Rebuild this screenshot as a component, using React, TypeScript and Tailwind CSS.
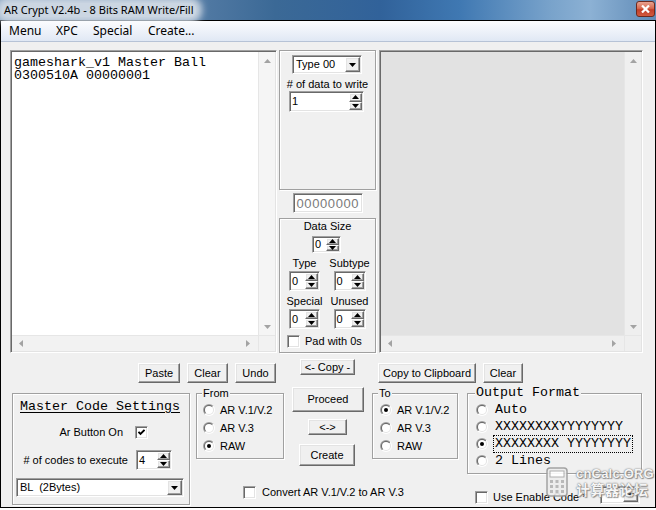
import React from "react";

const SUNKEN =
  "border border-t-[#a0a0a0] border-l-[#a0a0a0] border-b-white border-r-white shadow-[inset_1px_1px_0_#696969,inset_-1px_-1px_0_#e3e3e3]";
const RAISED =
  "bg-[#f0f0f0] border border-t-white border-l-white border-b-[#696969] border-r-[#696969] shadow-[inset_-1px_-1px_0_#a0a0a0,inset_1px_1px_0_#e3e3e3]";
const GROUP = "border border-[#a0a0a0] shadow-[inset_1px_1px_0_#ffffff,1px_1px_0_#ffffff]";
const MONO = "font-['Liberation_Mono','Courier_New',monospace] text-[13.33px]";

function Tri({ dir, color = "#000" }: { dir: "up" | "down" | "left" | "right"; color?: string }) {
  const vert = dir === "up" || dir === "down";
  const w = vert ? 7 : 4;
  const h = vert ? 4 : 7;
  const d =
    dir === "up" ? "M0 4h7L3.5 0z" : dir === "down" ? "M0 0h7L3.5 4z" : dir === "left" ? "M4 0v7L0 3.5z" : "M0 0v7L4 3.5z";
  return (
    <svg width={w} height={h} viewBox={`0 0 ${w} ${h}`} className="block">
      <path d={d} fill={color} />
    </svg>
  );
}

function Btn({ cls, children }: { cls: string; children: React.ReactNode }) {
  return (
    <div className={`${RAISED} ${cls} shrink-0 flex items-center justify-center text-[11px] leading-none text-black`}>
      {children}
    </div>
  );
}

function Spin({ cls, value }: { cls: string; value: string }) {
  return (
    <div className={`${SUNKEN} ${cls} shrink-0 bg-white flex p-[1px]`}>
      <div className="flex-1 flex items-center pl-[1px] text-[11px] leading-none">{value}</div>
      <div className="flex flex-col w-[13px]">
        <div className={`${RAISED} flex-1 flex items-center justify-center`}>
          <Tri dir="up" />
        </div>
        <div className={`${RAISED} flex-1 flex items-center justify-center`}>
          <Tri dir="down" />
        </div>
      </div>
    </div>
  );
}

function Combo({ cls, value }: { cls: string; value: string }) {
  return (
    <div className={`${SUNKEN} ${cls} shrink-0 bg-white flex p-[1px]`}>
      <div className="flex-1 flex items-center pl-[2px] text-[11px] leading-none whitespace-pre">{value}</div>
      <div className={`${RAISED} w-[15px] flex items-center justify-center`}>
        <Tri dir="down" />
      </div>
    </div>
  );
}

function RadioIcon({ checked }: { checked?: boolean }) {
  return (
    <svg width="12" height="12" viewBox="0 0 12 12" className="block shrink-0">
      <defs>
        <linearGradient id="ro" x1="0" y1="0" x2="1" y2="1">
          <stop offset="0.5" stopColor="#a0a0a0" />
          <stop offset="0.5" stopColor="#ffffff" />
        </linearGradient>
        <linearGradient id="ri" x1="0" y1="0" x2="1" y2="1">
          <stop offset="0.5" stopColor="#696969" />
          <stop offset="0.5" stopColor="#e3e3e3" />
        </linearGradient>
      </defs>
      <circle cx="6" cy="6" r="6" fill="url(#ro)" />
      <circle cx="6" cy="6" r="5" fill="url(#ri)" />
      <circle cx="6" cy="6" r="4" fill="#ffffff" />
      {checked && <circle cx="6" cy="6" r="2" fill="#000" />}
    </svg>
  );
}

function Check({ checked }: { checked?: boolean }) {
  return (
    <div className={`${SUNKEN} w-[13px] h-[13px] shrink-0 bg-white flex items-center justify-center`}>
      {checked && (
        <svg width="7" height="7" viewBox="0 0 7 7" className="block">
          <path d="M0.5 2.8 L2.5 4.8 L6.5 0.8" stroke="#000" strokeWidth="1.9" fill="none" />
        </svg>
      )}
    </div>
  );
}

function RadioRow({
  label,
  checked,
  gap,
  mono,
  focus,
  h,
}: {
  label: string;
  checked?: boolean;
  gap: string;
  mono?: boolean;
  focus?: boolean;
  h: string;
}) {
  return (
    <div className={`flex items-center ${h}`}>
      <RadioIcon checked={checked} />
      <span
        className={`${gap} whitespace-pre ${mono ? `${MONO} leading-[14px]` : "text-[11px] leading-none"} ${
          focus ? "outline outline-1 outline-dotted outline-black outline-offset-[1px]" : ""
        }`}
      >
        {label}
      </span>
    </div>
  );
}

function VScroll({ bg }: { bg: string }) {
  return (
    <div className={`w-[17px] ${bg} border-l border-[#e6e6e6] flex flex-col items-center justify-between pt-[7px] pb-[6px]`}>
      <Tri dir="up" color="#a3a3a3" />
      <Tri dir="down" color="#a3a3a3" />
    </div>
  );
}

function HScroll({ bg }: { bg: string }) {
  return (
    <div className={`h-[16px] flex-1 ${bg} border-t border-[#e6e6e6] flex items-center justify-between pl-[7px] pr-[8px]`}>
      <Tri dir="left" color="#a3a3a3" />
      <Tri dir="right" color="#a3a3a3" />
    </div>
  );
}

export default function App() {
  return (
    <div className="w-[656px] h-[510px] bg-white relative overflow-hidden font-['Liberation_Sans',Arial,sans-serif] text-black">
      {/* Title bar */}
      <div className="h-[20px] flex items-center bg-[linear-gradient(90deg,#7d9bbb_0%,#5d82aa_25%,#3b6996_42%,#31629a_58%,#3f78b2_70%,#79a3cb_84%,#8cb1d4_90%,#5f8ab6_100%)]">
        <div className="ml-[2px] px-[2px] rounded-[6px] bg-[#cbd6e2] shadow-[0_0_7px_6px_#cbd6e2] font-['Noto_Sans',sans-serif] text-[11px] leading-[14px] text-black whitespace-nowrap">
          AR Crypt V2.4b - 8 Bits RAM Write/Fill
        </div>
        <div className="ml-auto mr-[1px] mb-[2px] w-[19px] h-[16px] rounded-[3px] border border-[#6d2a1f] bg-[linear-gradient(180deg,#e8a290_0%,#d86a50_45%,#c2402a_55%,#d25a3e_100%)] flex items-center justify-center">
          <svg width="9" height="8" viewBox="0 0 9 8" className="block">
            <path d="M1 0.5 L8 7.5 M8 0.5 L1 7.5" stroke="#ffffff" strokeWidth="2.2" />
          </svg>
        </div>
      </div>

      {/* Window frame */}
      <div className="h-[488px] border border-black flex flex-col bg-[#f0f0f0]">
        {/* Menu bar */}
        <div className="h-[21px] shrink-0 border-b border-[#b7c3d6] bg-[linear-gradient(180deg,#fbfcfe_0%,#eef2f9_50%,#e0e8f4_100%)] flex items-center pl-[8px] font-['Noto_Sans',sans-serif] text-[12px] leading-none">
          <span className="w-[47px]">Menu</span>
          <span className="w-[37px]">XPC</span>
          <span className="w-[55px]">Special</span>
          <span>Create...</span>
        </div>

        {/* Row 1 */}
        <div className="flex mt-[8px] pl-[9px]">
          {/* Left editor */}
          <div className={`${SUNKEN} w-[267px] h-[303px] shrink-0 bg-white flex flex-col p-[1px]`}>
            <div className="flex flex-1 min-h-0">
              <div className={`flex-1 ${MONO} leading-[13px] pt-[4px] pl-[2px] whitespace-pre`}>
                {"gameshark_v1 Master Ball\n0300510A 00000001"}
              </div>
              <VScroll bg="bg-[#f5f5f5]" />
            </div>
            <div className="flex">
              <HScroll bg="bg-[#f2f2f2]" />
              <div className="w-[17px] h-[16px] bg-[#f2f2f2] border-t border-l border-[#e6e6e6]" />
            </div>
          </div>

          {/* Middle column */}
          <div className="ml-[2px] w-[97px] shrink-0 flex flex-col">
            <div className={`${GROUP} h-[140px] flex flex-col items-start`}>
              <Combo cls="ml-[12px] mt-[4px] w-[70px] h-[19px]" value="Type 00" />
              <div className="w-full text-center mt-[4px] text-[11px] leading-[12px]"># of data to write</div>
              <Spin cls="ml-[9px] mt-[1px] w-[75px] h-[21px]" value="1" />
            </div>
            <div
              className={`${SUNKEN} mt-[3px] mx-auto w-[70px] h-[20px] bg-white flex items-center pl-[3px] text-[13px] tracking-[0.6px] leading-none text-[#7a7a7a]`}
            >
              00000000
            </div>
            <div className={`${GROUP} mt-[5px] h-[135px] flex flex-col`}>
              <div className="mt-[1px] text-center text-[11px] leading-[12px]">Data Size</div>
              <div className="mt-[4px] flex justify-center pr-[2px]">
                <Spin cls="w-[29px] h-[17px]" value="0" />
              </div>
              <div className="mt-[4px] grid grid-cols-2 pl-[2px] pr-[3px] text-[11px] leading-[12px] text-center">
                <span>Type</span>
                <span>Subtype</span>
              </div>
              <div className="mt-[2px] grid grid-cols-2 pl-[2px] pr-[3px] justify-items-center">
                <Spin cls="w-[31px] h-[20px]" value="0" />
                <Spin cls="w-[32px] h-[20px]" value="0" />
              </div>
              <div className="mt-[4px] grid grid-cols-2 pl-[2px] pr-[3px] text-[11px] leading-[12px] text-center">
                <span>Special</span>
                <span>Unused</span>
              </div>
              <div className="mt-[2px] grid grid-cols-2 pl-[2px] pr-[3px] justify-items-center">
                <Spin cls="w-[31px] h-[20px]" value="0" />
                <Spin cls="w-[32px] h-[20px]" value="0" />
              </div>
              <div className="mt-[6px] ml-[7px] flex items-center">
                <Check />
                <span className="ml-[5px] text-[11px] leading-none">Pad with 0s</span>
              </div>
            </div>
          </div>

          {/* Right list */}
          <div className={`${SUNKEN} ml-[3px] w-[264px] h-[303px] shrink-0 bg-[#e2e2e2] flex flex-col p-[1px]`}>
            <div className="flex flex-1 min-h-0">
              <div className="flex-1" />
              <VScroll bg="bg-[#efefef]" />
            </div>
            <div className="flex">
              <HScroll bg="bg-[#efefef]" />
              <div className="w-[17px] h-[16px] bg-[#efefef] border-t border-l border-[#e6e6e6]" />
            </div>
          </div>
        </div>

        {/* Row 2 */}
        <div className="h-[30px] flex items-start">
          <Btn cls="ml-[137px] mt-[10px] w-[42px] h-[20px]">Paste</Btn>
          <Btn cls="ml-[7px] mt-[10px] w-[41px] h-[20px]">Clear</Btn>
          <Btn cls="ml-[7px] mt-[10px] w-[41px] h-[20px]">Undo</Btn>
          <Btn cls="ml-[24px] mt-[6px] w-[55px] h-[16px]">&lt;- Copy -</Btn>
          <Btn cls="ml-[23px] mt-[10px] w-[98px] h-[20px]">Copy to Clipboard</Btn>
          <Btn cls="ml-[7px] mt-[10px] w-[40px] h-[20px]">Clear</Btn>
        </div>

        {/* Row 3 */}
        <div className="flex items-start">
          {/* Master Code Settings */}
          <div className={`${GROUP} ml-[11px] mt-[10px] w-[178px] h-[112px] shrink-0 flex flex-col`}>
            <div className={`ml-[7px] mt-[6px] ${MONO} leading-[14px] underline underline-offset-[2px]`}>
              Master Code Settings
            </div>
            <div className="mt-[12px] flex items-center">
              <span className="w-[110px] text-right text-[11px] leading-none">Ar Button On</span>
              <div className="ml-[12px]">
                <Check checked />
              </div>
            </div>
            <div className="mt-[11px] flex items-center">
              <span className="w-[115px] text-right text-[11px] leading-none"># of codes to execute</span>
              <Spin cls="ml-[8px] w-[36px] h-[20px]" value="4" />
            </div>
            <Combo cls="ml-[3px] mt-[8px] w-[168px] h-[19px]" value="BL  (2Bytes)" />
          </div>

          <div className="ml-[6px] flex flex-col">
            <div className="h-[91px] flex items-start">
              {/* From */}
              <div className={`${GROUP} relative mt-[10px] w-[88px] h-[66px] shrink-0 pt-[7px] pl-[6px]`}>
                <span className="absolute -top-[7px] left-[5px] px-[1px] bg-[#f0f0f0] text-[11px] leading-[13px]">From</span>
                <RadioRow h="h-[18px]" gap="ml-[5px]" label="AR V.1/V.2" />
                <RadioRow h="h-[18px]" gap="ml-[5px]" label="AR V.3" />
                <RadioRow h="h-[18px]" gap="ml-[5px]" label="RAW" checked />
              </div>
              {/* buttons */}
              <div className="ml-[8px] w-[72px] shrink-0 flex flex-col items-start">
                <Btn cls="mt-[4px] w-[72px] h-[25px]">Proceed</Btn>
                <Btn cls="mt-[7px] ml-[16px] w-[39px] h-[16px]">&lt;-&gt;</Btn>
                <Btn cls="mt-[9px] ml-[7px] w-[56px] h-[22px]">Create</Btn>
              </div>
              {/* To */}
              <div className={`${GROUP} relative ml-[8px] mt-[10px] w-[86px] h-[66px] shrink-0 pt-[7px] pl-[7px]`}>
                <span className="absolute -top-[7px] left-[5px] px-[1px] bg-[#f0f0f0] text-[11px] leading-[13px]">To</span>
                <RadioRow h="h-[18px]" gap="ml-[5px]" label="AR V.1/V.2" checked />
                <RadioRow h="h-[18px]" gap="ml-[5px]" label="AR V.3" />
                <RadioRow h="h-[18px]" gap="ml-[5px]" label="RAW" />
              </div>
              {/* Output Format */}
              <div className={`${GROUP} relative ml-[9px] mt-[10px] w-[175px] h-[81px] shrink-0 pt-[7px] pl-[8px]`}>
                <span className={`absolute -top-[8px] left-[7px] px-[1px] bg-[#f0f0f0] ${MONO} leading-[14px]`}>
                  Output Format
                </span>
                <RadioRow h="h-[17px]" gap="ml-[7px]" mono label="Auto" />
                <RadioRow h="h-[17px]" gap="ml-[7px]" mono label="XXXXXXXXYYYYYYYY" />
                <RadioRow h="h-[17px]" gap="ml-[7px]" mono focus checked label="XXXXXXXX YYYYYYYY" />
                <RadioRow h="h-[17px]" gap="ml-[7px]" mono label="2 Lines" />
              </div>
            </div>
            <div className="flex items-start">
              <div className="ml-[47px] mt-[12px] w-[232px] shrink-0 flex items-center">
                <Check />
                <span className="ml-[6px] text-[11px] leading-none">Convert AR V.1/V.2 to AR V.3</span>
              </div>
              <div className="mt-[17px] w-[125px] shrink-0 flex items-center">
                <Check />
                <span className="ml-[5px] text-[11px] leading-none">Use Enable Code *</span>
              </div>
              <Combo cls="mt-[12px] w-[40px] h-[18px]" value="" />
            </div>
          </div>
        </div>
      </div>

      {/* watermark */}
      <div className="absolute left-[546px] top-[467px] flex items-start opacity-90 pointer-events-none">
        <svg width="22" height="30" viewBox="0 0 22 30" className="block">
          <rect x="1" y="1" width="20" height="28" rx="3" fill="#ededed" stroke="#9a9a9a" strokeWidth="1.5" />
          <rect x="4" y="4" width="14" height="6" fill="#ffffff" stroke="#a8a8a8" />
          <g fill="#b4b4b4">
            <rect x="4" y="13" width="3" height="3" />
            <rect x="9.5" y="13" width="3" height="3" />
            <rect x="15" y="13" width="3" height="3" />
            <rect x="4" y="18" width="3" height="3" />
            <rect x="9.5" y="18" width="3" height="3" />
            <rect x="15" y="18" width="3" height="3" />
            <rect x="4" y="23" width="3" height="3" />
            <rect x="9.5" y="23" width="3" height="3" />
            <rect x="15" y="23" width="3" height="3" />
          </g>
        </svg>
        <div className="ml-[8px] flex flex-col font-bold text-[#f6f6f6] [text-shadow:0_0_1px_#6f6f6f,0_0_2px_#808080,1px_1px_1px_#8a8a8a]">
          <span className="font-['Liberation_Sans',sans-serif] text-[13px] leading-[14px] tracking-[0.2px]">cnCalc.ORG</span>
          <span className="font-['Noto_Sans_CJK_SC',sans-serif] text-[14px] leading-[17px] tracking-[0.5px]">计算器论坛</span>
        </div>
      </div>
    </div>
  );
}
